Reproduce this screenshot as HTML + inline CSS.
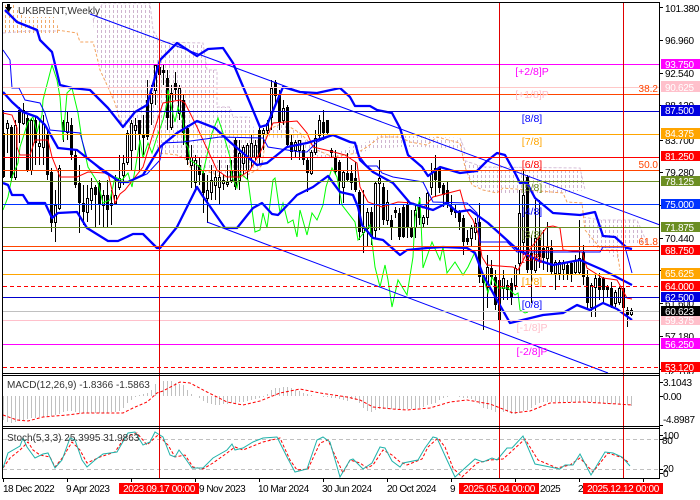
<!DOCTYPE html>
<html><head><meta charset="utf-8"><style>
html,body{margin:0;padding:0;background:#fff;width:700px;height:500px;overflow:hidden}
svg{display:block}
text{font-family:"Liberation Sans",sans-serif;font-size:10px}
.ax text{letter-spacing:-.3px}
.dt text{letter-spacing:-.5px}
.bx text{letter-spacing:-.38px}
.l text{font-size:10.5px}
</style></head><body>
<svg width="700" height="500" viewBox="0 0 700 500" xmlns="http://www.w3.org/2000/svg">
<defs>
<pattern id="d" width="4" height="5" patternUnits="userSpaceOnUse"><rect x="1" y="0" width="1" height="3" fill="#cfb4cf"/></pattern>
<pattern id="o" width="4" height="5" patternUnits="userSpaceOnUse"><rect x="1" y="0" width="1" height="3" fill="#f0a868"/></pattern>
</defs>
<rect width="700" height="500" fill="#fff"/>
<!-- cloud -->
<polygon fill="url(#o)" points="3,5 15,5 25,17 55,17 60,33 3,33"/>
<polygon fill="url(#d)" points="93,20 103,3 150,3 153,30 160,42 203,43 207,70 217,70 217,107 230,107 233,117 250,117 258,140 262,165 250,172 232,177 205,172 190,165 184,158 172,155 160,155 148,130 122,127 115,103 107,85 100,65 95,40"/>
<polygon fill="url(#d)" points="265,135 280,123 300,133 317,150 333,155 350,147 367,142 380,135 460,138 465,150 440,148 420,147 400,147 370,150 350,155 333,160 310,155 295,140 280,140"/>
<polygon fill="url(#d)" points="463,160 483,167 580,168 585,190 563,193 497,193 483,190 468,180"/>
<polygon fill="url(#d)" points="583,217 600,220 637,220 648,245 622,245 620,262 605,250 590,246"/>
<g fill="none" stroke-width="1" stroke-dasharray="3 2">
<polyline stroke="#d8bfd8" points="93,20 103,3 150,3 153,30 160,42 203,43 207,70 217,70 217,107 230,107 233,117 250,117"/>
<polyline stroke="#d8bfd8" points="3,33 30,31 57,31"/>
<polyline stroke="#d8bfd8" points="460,138 465,150 463,160 483,167 580,168 585,190"/>
<polyline stroke="#d8bfd8" points="583,217 600,220 637,220 648,245"/>
<polyline stroke="#f4a460" points="57,30 77,33 80,42 93,42 97,57 100,70 107,85 115,103 122,127"/>
<polyline stroke="#f4a460" points="160,153 177,155 187,160 190,167 203,170 223,177 243,177 257,170 262,165 267,130 283,123 300,133 317,150 333,157 357,153 367,147 380,137 400,137 410,142 427,145 437,137 460,143 465,167 472,185 483,190 497,193 503,188 563,193 567,202 582,203 585,230 602,250 617,250 620,270"/>
</g>
<!-- candle wicks -->
<path stroke="#000" stroke-width="1" fill="none" shape-rendering="crispEdges" d="M3.5 110V178M7.5 120V153M11.5 125V182M15.5 120V180M19.5 107V143M23.5 103V125M27.5 115V172M31.5 118V175M35.5 117V165M39.5 120V165M43.5 115V165M47.5 130V180M51.5 168V232M55.5 190V242M59.5 165V210M63.5 120V142M67.5 112V140M71.5 118V160M75.5 150V188M79.5 165V233M83.5 185V225M87.5 185V222M91.5 178V210M95.5 185V228M99.5 180V225M103.5 190V228M107.5 180V227M111.5 190V225M115.5 175V205M119.5 155V190M123.5 155V185M127.5 130V165M131.5 120V170M135.5 118V150M139.5 120V170M143.5 115V155M147.5 80V140M151.5 85V125M155.5 65V105M159.5 65V95M163.5 65V85M167.5 70V130M171.5 85V130M175.5 72V100M179.5 85V120M183.5 95V145M187.5 125V165M191.5 145V188M195.5 155V190M199.5 158V185M203.5 170V213M207.5 175V223M211.5 165V200M215.5 170V200M219.5 160V205M223.5 175V190M227.5 165V187M231.5 160V183M235.5 138V190M239.5 140V190M243.5 145V175M247.5 143V180M251.5 135V168M255.5 140V160M259.5 125V165M263.5 128V150M267.5 120V135M271.5 80V130M275.5 80V103M279.5 90V130M283.5 100V125M287.5 105V147M291.5 135V160M295.5 140V158M299.5 140V160M303.5 145V165M307.5 158V192M311.5 150V175M315.5 130V155M319.5 115V140M323.5 110V140M327.5 120V135M331.5 148V158M335.5 150V175M339.5 160V205M343.5 170V203M347.5 153V182M351.5 165V190M355.5 162V192M359.5 190V240M363.5 190V253M367.5 208V247M371.5 207V245M375.5 182V238M379.5 160V230M383.5 183V225M387.5 190V225M391.5 215V240M395.5 207V218M399.5 208V240M403.5 205V238M407.5 200V238M411.5 210V238M415.5 205V238M419.5 197V225M423.5 215V228M427.5 192V225M431.5 163V195M435.5 155V197M439.5 168V193M443.5 183V207M447.5 182V208M451.5 195V215M455.5 205V218M459.5 210V230M463.5 215V255M467.5 230V245M471.5 225V247M475.5 218V240M479.5 203V283M483.5 275V330M487.5 255V308M491.5 260V285M495.5 270V310M499.5 278V322M503.5 270V300M507.5 280V300M511.5 278V305M515.5 265V290M519.5 190V275M523.5 170V255M527.5 175V273M531.5 235V303M535.5 200V273M539.5 200V268M543.5 230V270M547.5 222V272M551.5 240V275M555.5 260V290M559.5 260V280M563.5 260V280M567.5 262V280M571.5 262V282M575.5 255V275M579.5 220V275M583.5 245V285M587.5 270V310M591.5 283V317M595.5 275V317M599.5 273V300M603.5 277V303M607.5 285V297M611.5 282V308M615.5 290V307M619.5 287V305M623.5 287V313M627.5 307V327M631.5 308V316"/>
<!-- black bodies -->
<path stroke="#000" stroke-width="3" fill="none" shape-rendering="crispEdges" d="M3.5 133V177M11.5 127V178M19.5 110V123M27.5 118V170M35.5 120V143M47.5 135V175M51.5 172V223M63.5 122V132M71.5 125V155M75.5 155V185M79.5 183V203M83.5 203V212M95.5 187V195M99.5 183V205M107.5 195V210M139.5 120V135M143.5 135V138M147.5 100V137M159.5 67V75M163.5 70V73M167.5 78V118M175.5 83V90M183.5 100V133M187.5 128V160M199.5 165V175M203.5 173V193M235.5 140V187M259.5 130V157M275.5 82V96M279.5 95V123M287.5 107V145M291.5 142V152M303.5 150V160M307.5 160V173M323.5 122V133M327.5 120V133M331.5 150V153M335.5 157V172M339.5 162V182M347.5 173V180M351.5 173V183M355.5 178V190M359.5 192V232M371.5 212V237M383.5 187V220M391.5 220V228M395.5 210V213M399.5 213V237M403.5 207V237M407.5 205V227M411.5 228V237M419.5 207V218M435.5 168V180M439.5 168V188M443.5 185V195M447.5 190V205M451.5 207V212M455.5 210V213M459.5 212V222M463.5 218V242M467.5 238V242M479.5 222V277M483.5 275V283M491.5 268V277M495.5 277V305M499.5 280V320M507.5 285V290M511.5 283V297M527.5 177V270M531.5 253V270M539.5 238V257M543.5 248V258M551.5 248V272M567.5 265V275M571.5 263V275M583.5 252V277M587.5 277V303M599.5 278V290M603.5 278V290M607.5 287V290M611.5 288V307M623.5 288V308M627.5 310V315"/>
<!-- white bodies -->
<path stroke="#000" stroke-width="1" fill="#fff" shape-rendering="crispEdges" d="M6.5 123.5h2v5h-2zM14.5 125.5h2v52h-2zM22.5 110.5h2v13h-2zM30.5 120.5h2v50h-2zM38.5 143.5h2v3h-2zM42.5 123.5h2v24h-2zM54.5 205.5h2v17h-2zM58.5 168.5h2v40h-2zM66.5 122.5h2v10h-2zM86.5 198.5h2v14h-2zM90.5 188.5h2v12h-2zM102.5 195.5h2v10h-2zM110.5 203.5h2v2h-2zM114.5 195.5h2v8h-2zM118.5 178.5h2v9h-2zM122.5 163.5h2v12h-2zM126.5 133.5h2v29h-2zM130.5 123.5h2v27h-2zM134.5 125.5h2v5h-2zM150.5 93.5h2v10h-2zM154.5 65.5h2v25h-2zM170.5 93.5h2v34h-2zM178.5 88.5h2v25h-2zM190.5 157.5h2v8h-2zM194.5 160.5h2v22h-2zM206.5 190.5h2v8h-2zM210.5 180.5h2v12h-2zM214.5 177.5h2v8h-2zM218.5 177.5h2v10h-2zM222.5 180.5h2v3h-2zM226.5 182.5h2v2h-2zM230.5 170.5h2v10h-2zM238.5 153.5h2v27h-2zM242.5 147.5h2v16h-2zM246.5 145.5h2v25h-2zM250.5 143.5h2v14h-2zM254.5 145.5h2v12h-2zM262.5 130.5h2v3h-2zM266.5 123.5h2v7h-2zM270.5 88.5h2v29h-2zM282.5 108.5h2v12h-2zM294.5 142.5h2v8h-2zM298.5 140.5h2v10h-2zM310.5 152.5h2v21h-2zM314.5 138.5h2v14h-2zM318.5 120.5h2v15h-2zM342.5 172.5h2v15h-2zM362.5 228.5h2v4h-2zM366.5 212.5h2v16h-2zM374.5 183.5h2v47h-2zM378.5 178.5h2v5h-2zM386.5 202.5h2v18h-2zM414.5 210.5h2v17h-2zM422.5 217.5h2v6h-2zM426.5 193.5h2v24h-2zM430.5 173.5h2v14h-2zM470.5 228.5h2v10h-2zM474.5 223.5h2v9h-2zM486.5 267.5h2v20h-2zM502.5 278.5h2v10h-2zM514.5 268.5h2v17h-2zM518.5 213.5h2v50h-2zM522.5 195.5h2v47h-2zM534.5 238.5h2v32h-2zM546.5 247.5h2v11h-2zM554.5 262.5h2v11h-2zM558.5 262.5h2v11h-2zM562.5 262.5h2v7h-2zM574.5 260.5h2v12h-2zM578.5 258.5h2v14h-2zM590.5 285.5h2v22h-2zM594.5 278.5h2v9h-2zM614.5 292.5h2v11h-2zM618.5 288.5h2v14h-2zM630.5 310.5h2v4h-2z"/>
<!-- green -->
<polyline fill="none" stroke="#00ff00" stroke-width="1" points="3,210 8,197 12,177 18,163 20,147 28,122 33,117 37,132 42,115 43,100 52,65 57,80 60,97 63,140 67,93 72,88 78,113 82,140 88,167 98,183 103,203 110,200 115,177 122,180 128,173 132,187 135,170 140,140 143,158 148,143 152,153 157,137 163,120 167,103 168,90 172,110 175,122 178,107 183,120 185,143 188,147 190,160 200,167 203,173 212,133 218,118 223,133 230,157 232,177 237,188 240,173 248,180 255,232 260,230 263,213 267,228 273,180 275,178 280,213 283,203 288,223 293,220 297,237 300,210 307,235 312,213 317,220 323,205 326,187 332,168 337,177 342,205 355,222 358,240 370,225 375,267 380,287 385,265 388,280 392,307 398,280 407,295 413,257 415,217 420,198 423,268 432,242 440,260 443,247 447,273 455,262 463,275 468,267 475,252 480,267 483,277 488,293 492,277 498,288 508,288 515,295 518,293 520,310 525,313 528,312"/>
<!-- red line -->
<polyline fill="none" stroke="#ff0000" stroke-width="1" points="3,113 12,115 17,128 17,147 20,155 30,155 35,140 48,140 52,157 60,177 77,177 88,172 105,173 108,173 115,203 120,194 125,190 143,167 152,137 163,103 180,100 185,103 197,127 203,140 217,170 227,177 240,177 250,170 260,153 273,123 297,121 307,133 313,147 330,151 345,155 357,163 360,187 368,202 382,207 398,202 413,203 423,208 433,197 460,190 465,208 473,220 478,233 482,257 487,265 513,267 518,270 527,253 547,227 553,226 560,228 563,250 582,252 587,268 603,278 617,280 627,298 632,299"/>
<!-- thin blue -->
<g fill="none" stroke="#0000ff" stroke-width="1">
<polyline points="3,50 10,60 12,88 19,88 25,100 40,103 45,113 50,130 80,133 87,158 103,172 120,182 128,182 147,174 160,160 163,143 183,142 220,137 263,138 268,147 300,152 307,152 317,142 333,135 350,142 355,142 357,153 367,166 377,166 382,173 393,177 423,182 433,202 467,203 477,213 480,242 507,242 517,252 600,252 603,247 625,247 632,273"/>
<line x1="90" y1="14" x2="660" y2="225"/>
<line x1="207" y1="222" x2="608" y2="373"/>
</g>
<!-- thick blue bands -->
<g fill="none" stroke="#0000ff" stroke-width="2.3" stroke-linejoin="round">
<polyline points="5,10 17,22 37,30 40,40 52,52 60,85 72,88 90,90 108,108 123,127 135,112 147,105 160,60 177,43 197,56 208,49 223,48 233,63 250,103 260,127 267,125 283,87 300,92 317,93 340,88 350,97 355,106 370,106 377,110 392,113 400,128 408,155 422,167 428,176 440,167 460,173 477,171 487,161 497,153 505,155 515,173 520,183 527,183 535,198 553,213 580,215 595,212 603,236 615,237 627,248 632,249"/>
<polyline points="3,92 12,102 23,112 37,117 45,125 58,148 77,150 87,158 100,168 120,182 128,182 143,175 160,147 177,133 197,121 215,128 230,142 257,165 267,163 287,147 307,143 333,135 350,142 355,143 360,160 373,172 393,183 410,203 433,210 447,203 457,212 470,210 488,223 518,250 537,260 553,265 580,260 603,270 632,285"/>
<polyline points="3,183 8,185 12,195 23,195 28,203 45,203 52,218 58,213 77,212 87,228 108,241 118,241 133,234 143,234 157,248 160,248 177,227 197,187 202,195 225,228 237,228 253,208 262,203 272,214 278,215 297,195 313,187 328,176 340,192 353,195 358,207 362,225 373,238 383,240 400,255 407,250 427,248 443,247 467,248 475,253 483,275 497,300 510,323 543,315 563,313 577,305 590,310 603,303 617,309 632,320"/>
</g>
<!-- horizontal levels -->
<g shape-rendering="crispEdges" stroke-width="1">
<line x1="3" x2="660" y1="64.5" y2="64.5" stroke="#ff00ff"/>
<line x1="3" x2="660" y1="87.5" y2="87.5" stroke="#ffc8c8"/>
<line x1="3" x2="660" y1="94.5" y2="94.5" stroke="#ff4500"/>
<line x1="3" x2="660" y1="111.5" y2="111.5" stroke="#0000cd"/>
<line x1="3" x2="660" y1="134.5" y2="134.5" stroke="#ffa500"/>
<line x1="3" x2="660" y1="157.5" y2="157.5" stroke="#ff0000"/>
<line x1="3" x2="660" y1="170.5" y2="170.5" stroke="#ff4500"/>
<line x1="3" x2="660" y1="181.5" y2="181.5" stroke="#6b8e23"/>
<line x1="3" x2="660" y1="204.5" y2="204.5" stroke="#0033ff"/>
<line x1="3" x2="660" y1="227.5" y2="227.5" stroke="#6b8e23"/>
<line x1="3" x2="660" y1="246.5" y2="246.5" stroke="#ff4500"/>
<line x1="3" x2="660" y1="250.5" y2="250.5" stroke="#ff0000"/>
<line x1="3" x2="660" y1="274.5" y2="274.5" stroke="#ffa500"/>
<line x1="3" x2="660" y1="286.5" y2="286.5" stroke="#ff0000" stroke-dasharray="4 3"/>
<line x1="3" x2="660" y1="297.5" y2="297.5" stroke="#0000cd"/>
<line x1="3" x2="660" y1="311.5" y2="311.5" stroke="#c0c0c0"/>
<line x1="3" x2="660" y1="320.5" y2="320.5" stroke="#ffc0cb"/>
<line x1="3" x2="660" y1="344.5" y2="344.5" stroke="#ff00ff"/>
<line x1="3" x2="660" y1="367.5" y2="367.5" stroke="#ff0000" stroke-dasharray="4 3"/>
</g>
<!-- MACD -->
<path stroke="#c0c0c0" stroke-width="1" fill="none" shape-rendering="crispEdges" d="M3.5 396V420M7.5 396V422M11.5 396V423M15.5 396V422M19.5 396V421M23.5 396V420M27.5 396V419M31.5 396V418M35.5 396V418M39.5 396V417M43.5 396V417M47.5 396V416M51.5 396V416M55.5 396V415M59.5 396V414M63.5 396V412M67.5 396V411M71.5 396V411M75.5 396V412M79.5 396V413M83.5 396V413M87.5 396V413M91.5 396V413M95.5 396V413M99.5 396V413M103.5 396V413M107.5 396V413M111.5 396V412M115.5 396V412M119.5 396V411M123.5 396V408M127.5 396V403M131.5 396V400M135.5 396V397M139.5 396V395M143.5 396V394M147.5 396V393M151.5 396V390M155.5 396V384M163.5 396V381M167.5 396V381M171.5 396V381M175.5 396V383M179.5 396V384M183.5 396V385M187.5 396V390M191.5 396V394M199.5 396V398M203.5 396V401M207.5 396V403M211.5 396V404M215.5 396V405M219.5 396V405M223.5 396V404M227.5 396V404M231.5 396V403M235.5 396V403M239.5 396V402M243.5 396V402M247.5 396V401M251.5 396V400M255.5 396V399M259.5 396V398M263.5 396V397M267.5 396V394M271.5 396V390M275.5 396V388M279.5 396V388M283.5 396V387M287.5 396V387M291.5 396V388M295.5 396V390M299.5 396V391M303.5 396V393M307.5 396V394M311.5 396V395M323.5 396V397M327.5 396V397M331.5 396V398M335.5 396V398M339.5 396V399M343.5 396V400M347.5 396V401M351.5 396V399M355.5 396V400M359.5 396V403M363.5 396V408M367.5 396V411M371.5 396V412M375.5 396V410M379.5 396V409M383.5 396V409M387.5 396V409M391.5 396V409M395.5 396V409M399.5 396V409M403.5 396V409M407.5 396V409M411.5 396V409M415.5 396V409M419.5 396V408M423.5 396V407M427.5 396V405M431.5 396V404M435.5 396V403M439.5 396V400M443.5 396V398M447.5 396V397M459.5 396V397M463.5 396V398M467.5 396V398M471.5 396V399M475.5 396V401M479.5 396V404M483.5 396V408M487.5 396V409M491.5 396V410M495.5 396V412M503.5 396V412M507.5 396V412M511.5 396V414M515.5 396V414M519.5 396V413M523.5 396V411M527.5 396V410M531.5 396V408M535.5 396V405M539.5 396V403M543.5 396V402M547.5 396V402M551.5 396V402M555.5 396V402M559.5 396V402M563.5 396V402M567.5 396V402M571.5 396V402M575.5 396V402M579.5 396V402M583.5 396V402M587.5 396V402M591.5 396V402M595.5 396V403M599.5 396V403M603.5 396V403M607.5 396V404M611.5 396V404M615.5 396V404M619.5 396V404M627.5 396V405M631.5 396V406"/>
<polyline fill="none" stroke="#ff0000" stroke-width="1" stroke-dasharray="3 2" points="3,415 17,420 28,421 43,417 67,415 83,413 100,413 123,413 133,408 147,402 157,393 163,391 180,382 190,383 207,392 227,402 243,405 260,401 280,393 300,389 320,393 347,397 360,400 373,407 393,409 407,410 430,408 450,402 467,400 490,404 513,413 530,411 550,403 583,402 617,404 632,405"/>
<!-- Stoch -->
<g shape-rendering="crispEdges" stroke="#c0c0c0" stroke-dasharray="4 3"><line x1="3" x2="660" y1="439.5" y2="439.5"/><line x1="3" x2="660" y1="469.5" y2="469.5"/></g>
<polyline fill="none" stroke="#ff0000" stroke-width="1" stroke-dasharray="3 2" points="3,468 10,458 20,450 28,442 33,450 40,455 50,457 55,467 63,457 72,442 80,450 87,463 100,457 115,452 125,437 137,433 147,445 158,435 168,445 175,457 185,455 193,467 203,469 213,463 227,453 235,447 243,450 263,442 280,438 290,460 297,470 308,469 320,443 328,440 343,473 350,460 360,463 367,468 373,465 383,450 392,455 400,462 407,465 422,459 428,447 438,438 445,447 453,468 462,477 477,463 490,460 503,459 513,450 525,439 538,460 557,468 570,465 580,458 593,472 608,453 623,458 628,462"/>
<polyline fill="none" stroke="#20b2aa" stroke-width="1" points="3,468 8,453 20,446 23,438 27,447 35,458 43,454 48,453 55,468 62,460 70,438 75,440 82,460 87,467 95,460 103,454 117,452 128,433 135,432 143,445 150,442 155,432 163,437 170,455 175,457 179,450 185,458 192,468 203,468 213,458 227,450 232,444 235,450 243,448 253,442 263,438 277,437 287,457 295,472 307,469 317,440 323,437 330,442 340,477 350,460 353,459 363,469 372,463 380,447 385,448 392,461 400,467 403,463 418,460 425,448 433,437 437,438 447,460 455,477 475,459 483,462 492,458 497,460 507,448 512,448 523,436 535,464 560,469 565,465 573,465 580,454 591,475 605,452 613,453 622,457 630,466"/>
<!-- vertical lines -->
<g stroke="#e00000" stroke-width="1" shape-rendering="crispEdges"><line x1="159.5" x2="159.5" y1="3" y2="479"/><line x1="499.5" x2="499.5" y1="3" y2="479"/><line x1="623.5" x2="623.5" y1="3" y2="479"/></g>
<!-- frames -->
<g shape-rendering="crispEdges" stroke="#000" fill="none" stroke-width="1">
<path d="M2.5 2.5H659.5V478.5H2.5ZM2.5 373.5H659.5M2.5 375.5H659.5M2.5 426.5H659.5M2.5 428.5H659.5"/>
<path d="M660 7.5h3M660 40.5h3M660 73.5h3M660 105.5h3M660 140.5h3M660 172.5h3M660 205.5h3M660 238.5h3M660 270.5h3M660 303.5h3M660 336.5h3M660 369.5h3M660 382.5h3M660 396.5h3M660 425.5h3M660 435.5h3M660 439.5h3M660 469.5h3M660 473.5h3"/>
<path d="M3.5 479v3M67.5 479v3M131.5 479v3M195.5 479v3M259.5 479v3M323.5 479v3M387.5 479v3M451.5 479v3M515.5 479v3M579.5 479v3M643.5 479v3"/>
</g>
<!-- title -->
<polygon points="5,7 12,7 8.5,12" fill="#000"/><rect x="7" y="4" width="3" height="3" fill="#000"/>
<text x="18" y="14" fill="#333">UKBRENT,Weekly</text>
<text x="7" y="388" fill="#333">MACD(12,26,9) -1.8366 -1.5863</text>
<text x="7" y="441" fill="#333">Stoch(5,3,3) 25.3995 31.9863</text>
<!-- level labels -->
<g class="l" text-anchor="middle">
<text x="532" y="75" fill="#ff00ff">[+2/8]P</text>
<text x="532" y="98" fill="#ffc0cb">[+1/8]P</text>
<text x="532" y="122" fill="#0000ff">[8/8]</text>
<text x="532" y="145" fill="#ffa500">[7/8]</text>
<text x="532" y="168" fill="#ff0000">[6/8]</text>
<text x="532" y="191" fill="#6b8e23">[5/8]</text>
<text x="532" y="215" fill="#0000ff">[4/8]</text>
<text x="532" y="238" fill="#6b8e23">[3/8]</text>
<text x="532" y="261" fill="#ff0000">[2/8]</text>
<text x="532" y="285" fill="#ffa500">[1/8]</text>
<text x="532" y="308" fill="#0000ff">[0/8]</text>
<text x="532" y="331" fill="#ffc0cb">[-1/8]P</text>
<text x="532" y="355" fill="#ff00ff">[-2/8]P</text>
</g>
<g text-anchor="end" fill="#ff4500">
<text x="658" y="92">38.2</text><text x="658" y="168">50.0</text><text x="658" y="245">61.8</text>
</g>
<!-- right axis -->
<g class="ax" fill="#000">
<text x="665" y="12">101.380</text><text x="665" y="44">96.960</text><text x="665" y="77">92.540</text><text x="665" y="109">88.120</text><text x="665" y="144">83.700</text><text x="665" y="176">79.280</text><text x="665" y="242">70.440</text><text x="665" y="307">61.600</text><text x="665" y="340">57.180</text><text x="665" y="375">52.760</text>
</g>
<rect x="660" y="374" width="40" height="4" fill="#fff"/>
<g class="ax" fill="#000">
<text x="663" y="386">3.1043</text><text x="663" y="400">0.00</text><text x="663" y="423">-4.8987</text>
<text x="663" y="439">100</text><text x="662" y="444">80</text><text x="663" y="472">20</text><text x="663" y="477">0</text>
</g>
<g shape-rendering="crispEdges">
<rect x="661" y="59" width="39" height="10" fill="#ff00ff"/>
<rect x="661" y="81" width="39" height="11" fill="#ffc0cb"/>
<rect x="661" y="105" width="39" height="11" fill="#0000e0"/>
<rect x="661" y="128" width="39" height="11" fill="#ffa500"/>
<rect x="661" y="151" width="39" height="10" fill="#ff0000"/>
<rect x="661" y="176" width="39" height="10" fill="#6b8e23"/>
<rect x="661" y="199" width="39" height="10" fill="#0033ff"/>
<rect x="661" y="222" width="39" height="10" fill="#6b8e23"/>
<rect x="661" y="245" width="39" height="10" fill="#ff0000"/>
<rect x="661" y="268" width="39" height="11" fill="#ffa500"/>
<rect x="661" y="281" width="39" height="10" fill="#ff0000"/>
<rect x="661" y="292" width="39" height="10" fill="#0000e0"/>
<rect x="661" y="306" width="39" height="10" fill="#000"/>
<rect x="661" y="316" width="39" height="9" fill="#ffc0cb"/>
<rect x="661" y="338" width="39" height="11" fill="#ff00ff"/>
<rect x="661" y="362" width="39" height="10" fill="#ff0000"/>
</g>
<g class="ax" fill="#fff">
<text x="665" y="68">93.750</text><text x="665" y="91">90.625</text><text x="665" y="114">87.500</text><text x="665" y="137">84.375</text><text x="665" y="160">81.250</text><text x="665" y="185">78.125</text><text x="665" y="208">75.000</text><text x="665" y="231">71.875</text><text x="665" y="254">68.750</text><text x="665" y="277">65.625</text><text x="665" y="290">64.000</text><text x="665" y="301">62.500</text><text x="665" y="315">60.623</text><text x="665" y="324">59.375</text><text x="665" y="348">56.250</text><text x="665" y="371">53.120</text>
</g>
<!-- date axis -->
<g fill="#000" class="dt">
<text x="3" y="492">18 Dec 2022</text><text x="66" y="492">9 Apr 2023</text><text x="199" y="492">9 Nov 2023</text><text x="258" y="492">10 Mar 2024</text><text x="322" y="492">30 Jun 2024</text><text x="387" y="492">20 Oct 2024</text><text x="450" y="492">9</text><text x="540" y="492">2025</text><text x="578" y="492">2</text>
</g>
<g shape-rendering="crispEdges" fill="#ff0000">
<rect x="119" y="483" width="80" height="11"/><rect x="459" y="483" width="80" height="11"/><rect x="583" y="483" width="80" height="11"/>
</g>
<g fill="#fff" text-anchor="middle" class="bx">
<text x="159" y="492">2023.09.17 00:00</text><text x="499" y="492">2025.05.04 00:00</text><text x="623" y="492">2025.12.12 00:00</text>
</g>
</svg>
</body></html>
